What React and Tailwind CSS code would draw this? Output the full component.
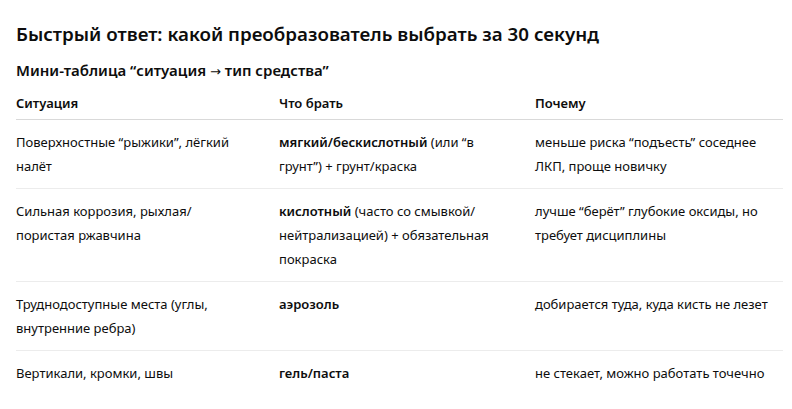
import React from 'react';

// Quick-answer table: situation → product type
const rows = [
  {
    situation: 'Поверхностные “рыжики”, лёгкий налёт',
    pick: (
      <>
        <b className="font-semibold">мягкий/бескислотный</b> (или “в грунт”) + грунт/краска
      </>
    ),
    why: 'меньше риска “подъесть” соседнее ЛКП, проще новичку',
  },
  {
    situation: 'Сильная коррозия, рыхлая/ пористая ржавчина',
    pick: (
      <>
        <b className="font-semibold">кислотный</b> (часто со смывкой/ нейтрализацией) + обязательная покраска
      </>
    ),
    why: 'лучше “берёт” глубокие оксиды, но требует дисциплины',
  },
  {
    situation: 'Труднодоступные места (углы, внутренние ребра)',
    pick: <b className="font-semibold">аэрозоль</b>,
    why: 'добирается туда, куда кисть не лезет',
  },
  {
    situation: 'Вертикали, кромки, швы',
    pick: <b className="font-semibold">гель/паста</b>,
    why: 'не стекает, можно работать точечно',
  },
];

const App = () => {
  return (
    <div className="bg-white text-[#0d0d0d] px-4 pt-[20px] font-['Segoe_UI','Noto_Sans',sans-serif]">
      <h2 className="text-[18.75px] leading-[28px] font-semibold">
        Быстрый ответ: какой преобразователь выбрать за 30 секунд
      </h2>
      <h3 className="mt-[11px] text-[15px] leading-[22px] font-semibold">
        Мини-таблица “ситуация <span className="font-['DejaVu_Sans',sans-serif] font-normal text-[13px]">→</span> тип средства”
      </h3>

      <div className="mt-[4px] w-[767px] text-[13px] leading-[24px]">
        {/* Header */}
        <div className="grid grid-cols-[263px_256px_1fr] border-b border-[#d9d9d9] pt-[4px] pb-[4px] font-semibold">
          <div>Ситуация</div>
          <div>Что брать</div>
          <div>Почему</div>
        </div>

        {/* Body */}
        {rows.map((row, i) => (
          <div
            key={i}
            className={`grid grid-cols-[263px_256px_1fr] py-[10px] ${i < rows.length - 1 ? 'border-b border-[#ececec]' : ''}`}
          >
            <div className="pr-[33px]">{row.situation}</div>
            <div className="pr-[26px]">{row.pick}</div>
            <div>{row.why}</div>
          </div>
        ))}
      </div>
    </div>
  );
};

export default App;
